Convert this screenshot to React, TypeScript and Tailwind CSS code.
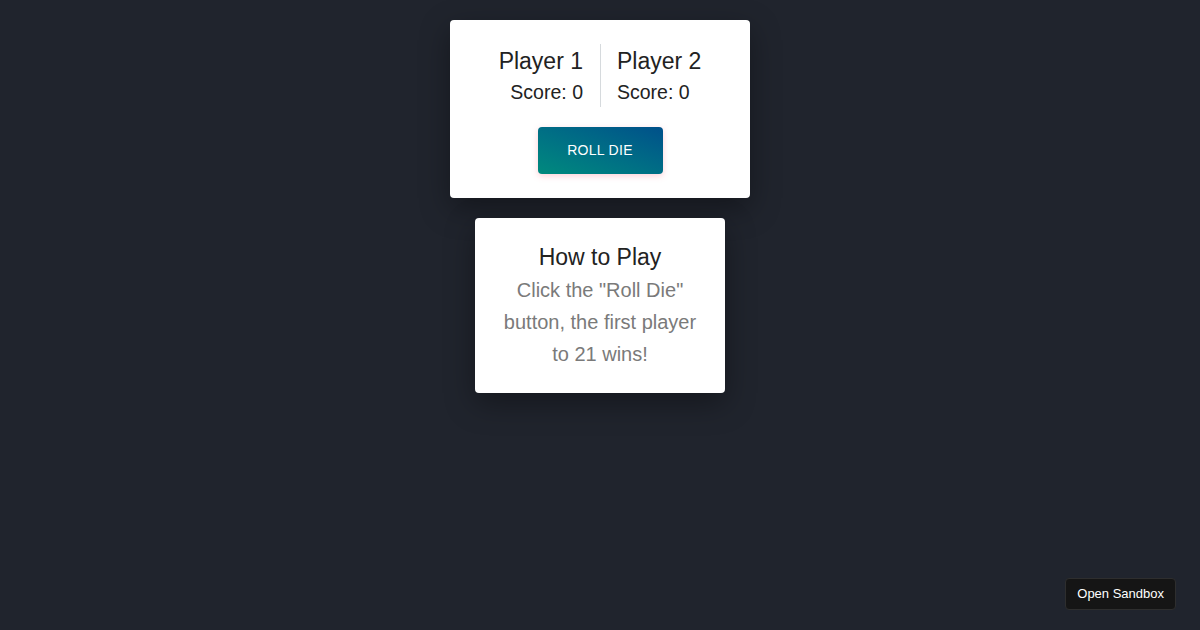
import React from 'react';

// Simple dice game scoreboard
const players = [
  { name: 'Player 1', score: 0 },
  { name: 'Player 2', score: 0 },
];

export default function App() {
  return (
    <div className="relative min-h-[630px] w-full bg-[#20242d] font-['Liberation_Sans',Arial,sans-serif] text-[#222]">
      <div className="flex flex-col items-center pt-5 gap-5">
        {/* Scoreboard card */}
        <div className="w-[300px] rounded bg-white pt-6 pb-6 flex flex-col items-center shadow-[0_10px_30px_rgba(0,0,0,0.35)]">
          <div className="flex">
            <div className="pr-[17px] pt-[3px] pb-[2px] text-right border-r border-[#d6dadd]">
              <div className="text-[23px] leading-[28px]">{players[0].name}</div>
              <div className="text-[19.5px] leading-[26px] mt-[4px]">Score: {players[0].score}</div>
            </div>
            <div className="pl-4 pt-[3px] pb-[2px] text-left">
              <div className="text-[23px] leading-[28px]">{players[1].name}</div>
              <div className="text-[19.5px] leading-[26px] mt-[4px]">Score: {players[1].score}</div>
            </div>
          </div>
          <button className="mt-5 w-[125px] h-[47px] rounded bg-gradient-to-tr from-[#008a7d] to-[#01508a] text-white text-[14px] tracking-[0.3px] shadow-[0_2px_6px_rgba(255,120,140,0.35)]">
            ROLL DIE
          </button>
        </div>

        {/* Instructions card */}
        <div className="w-[250px] rounded bg-white px-[25px] pt-[25px] pb-[23px] text-center shadow-[0_10px_30px_rgba(0,0,0,0.35)]">
          <div className="text-[23px] leading-[28px] text-[#222]">How to Play</div>
          <p className="mt-[3px] text-[20px] leading-[32px] text-[#7a7a7a]">
            Click the "Roll Die" button, the first player to 21 wins!
          </p>
        </div>
      </div>

      <button className="absolute right-6 bottom-5 h-8 px-[11px] rounded bg-[#151515] border border-[#2e2e2e] text-[13px] text-white">
        Open Sandbox
      </button>
    </div>
  );
}
